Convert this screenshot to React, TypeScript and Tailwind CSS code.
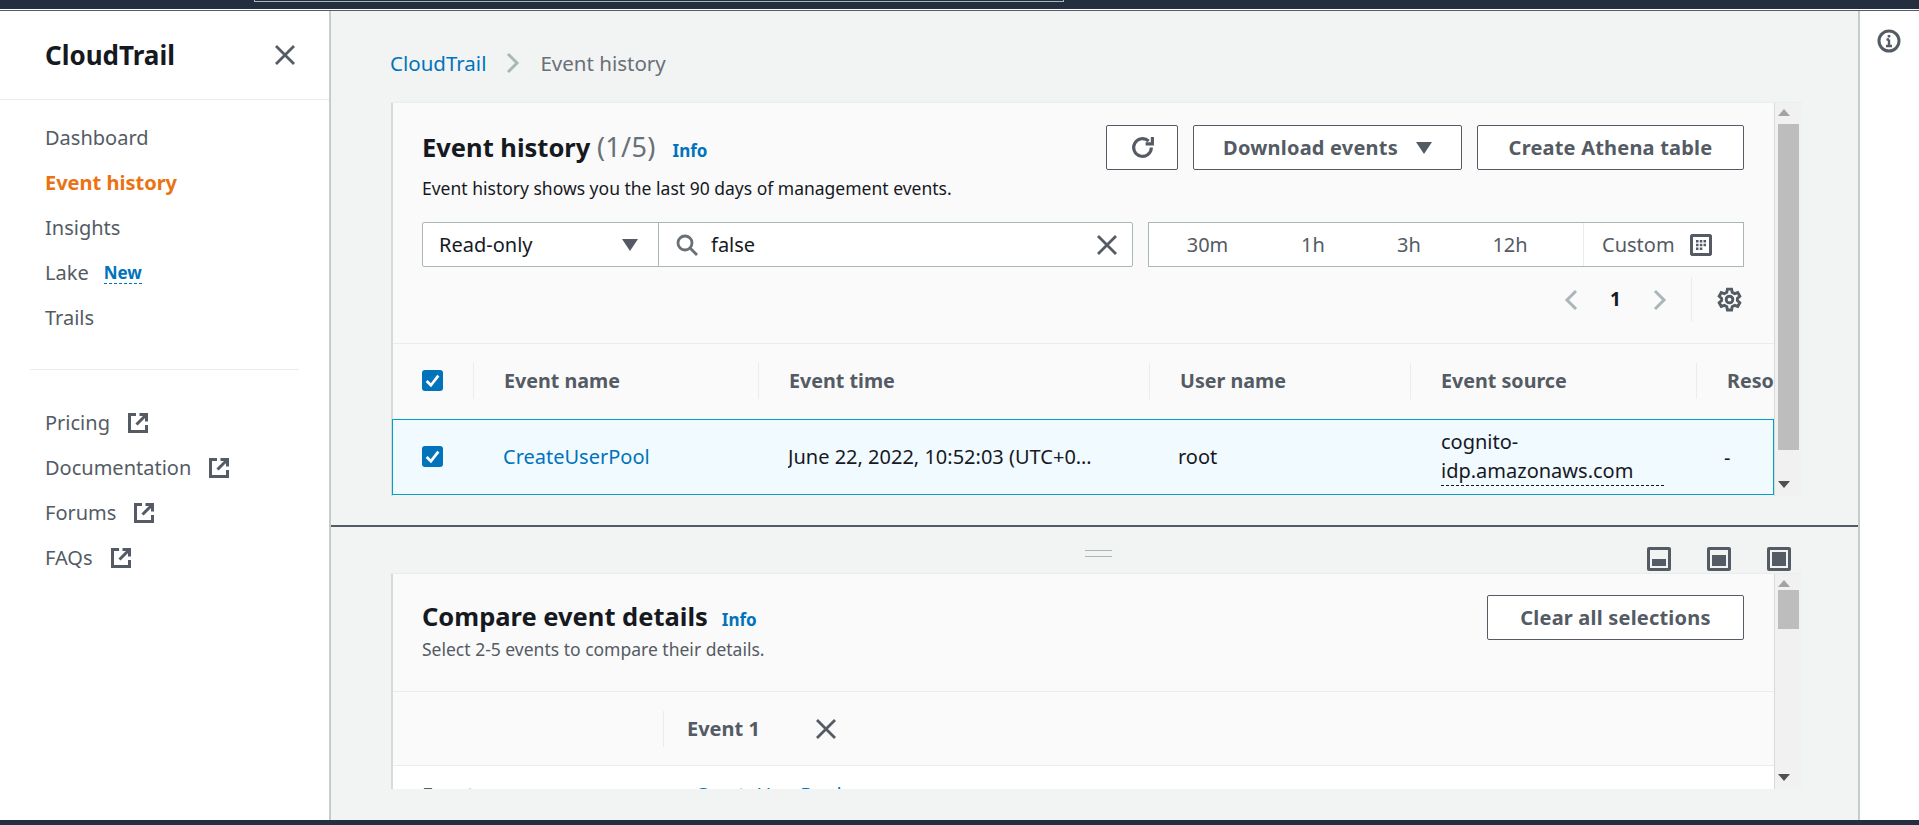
import React from "react";

const ExternalIcon = () => (
  <svg viewBox="0 0 22 22" className="w-[22px] h-[22px] text-[#545b64]" fill="none" stroke="currentColor" strokeWidth="3">
    <path d="M9 2.5H2.500v17h17V13" />
    <path d="M12.500 2.500h7v7" />
    <path d="M19 3 9.500 12.500" />
  </svg>
);

const CloseIcon = ({ size = 20 }: { size?: number }) => (
  <svg viewBox="0 0 20 20" width={size} height={size} fill="none" stroke="#545b64" strokeWidth="2.800">
    <path d="M1 1l18 18M19 1 1 19" />
  </svg>
);

const Caret = () => (
  <svg viewBox="0 0 16 12" className="w-4 h-3" fill="#545b64">
    <path d="M0 0h16L8 12z" />
  </svg>
);

const Check = () => (
  <span className="flex items-center justify-center w-[21px] h-[21px] rounded-[3px] bg-[#0073bb]">
    <svg viewBox="0 0 16 16" className="w-[17px] h-[17px]" fill="none" stroke="#fff" strokeWidth="2.600">
      <path d="M2.500 8.500 6.500 12.500 13.500 3.500" />
    </svg>
  </span>
);

const HeadCell = ({ label, width }: { label: string; width: string }) => (
  <div className={`${width} shrink-0 h-9 border-l border-[#eaeded] pl-[30px] flex items-center text-[19.700px] font-bold text-[#545b64] overflow-hidden whitespace-nowrap`}>
    {label}
  </div>
);

const PanelIcon = ({ fill }: { fill: string }) => (
  <div className="w-6 h-6 rounded-[2px] bg-[#545b64] p-[3px]">
    <div className="h-full bg-[#f2f3f3] flex flex-col justify-end">
      <div className={`${fill} bg-[#545b64]`} />
    </div>
  </div>
);

// scrollbar drawn like the old chromium one in the shot
const Scrollbar = ({ thumb }: { thumb: string }) => (
  <div className="relative w-[27px] shrink-0 bg-[#f1f1f1] border-l border-[#d5dbdb]">
    <div className="absolute left-[3px] top-[6px] w-0 h-0 border-x-[6px] border-x-transparent border-b-[7px] border-b-[#a3a3a3]" />
    <div className={`absolute left-[3px] w-[21px] bg-[#bdbdbd] ${thumb}`} />
    <div className="absolute left-[3px] bottom-[8px] w-0 h-0 border-x-[6px] border-x-transparent border-t-[7px] border-t-[#505050]" />
  </div>
);

const navTop = ["Dashboard", "Event history", "Insights"];
const navLinks = ["Pricing", "Documentation", "Forums", "FAQs"];

export default function App() {
  return (
    <div
      className="w-[1919px] h-[825px] overflow-hidden flex flex-col bg-[#f2f3f3] text-[20px] leading-[25px] text-[#16191f]"
      style={{ fontFamily: '"Noto Sans", "Open Sans", sans-serif' }}
    >
      {/* top bar */}
      <div className="h-[9px] shrink-0 bg-[#232f3e] pl-[254px]">
        <div className="w-[810px] h-[2px] border-x border-b border-[#aab7b8]" />
      </div>
      <div className="h-[2px] shrink-0 bg-[#545b64] border-t border-white" />

      <div className="flex-1 flex min-h-0">
        {/* sidebar */}
        <aside className="w-[331px] shrink-0 bg-white border-r-2 border-[#c6cccc]">
          <div className="h-[89px] border-b border-[#eaeded] pl-[45px] pr-[34px] flex items-center justify-between">
            <span className="text-[26px] font-bold">CloudTrail</span>
            <CloseIcon />
          </div>
          <nav className="pl-[45px] pt-[25px] flex flex-col gap-[20px] text-[#545b64]">
            {navTop.map((item) => (
              <a key={item} className={item === "Event history" ? "font-bold text-[#ec7211]" : ""}>
                {item}
              </a>
            ))}
            <a className="flex items-center gap-[15px]">
              Lake
              <span className="text-[17px] font-bold text-[#0073bb] border-b border-dashed border-[#0073bb] leading-[20px] mt-[1px]">New</span>
            </a>
            <a>Trails</a>
          </nav>
          <div className="mx-[30px] mt-[39px] border-t border-[#eaeded]" />
          <nav className="pl-[45px] pt-[40px] flex flex-col gap-[20px] text-[#545b64]">
            {navLinks.map((item) => (
              <a key={item} className="flex items-center gap-[17px]">
                {item}
                <ExternalIcon />
              </a>
            ))}
          </nav>
        </aside>

        {/* main */}
        <main className="flex-1 min-w-0 flex flex-col">
          <div className="h-[92px] shrink-0 pl-[59px] pt-[40px] flex items-start gap-[20px] text-[20.500px] text-[#687078]">
            <a className="text-[#0073bb]">CloudTrail</a>
            <svg viewBox="0 0 14 22" className="w-[14px] h-[22px] mt-[1px]" fill="none" stroke="#aab7b8" strokeWidth="3">
              <path d="M2 2l9 9-9 9" />
            </svg>
            <span>Event history</span>
          </div>

          {/* event history panel */}
          <div className="h-[393px] shrink-0 ml-[60px] mr-[57px] flex bg-[#fafafa] border-l-2 border-[#d5dbdb] shadow-[0_-1px_1px_#eaeded]">
            <div className="flex-1 min-w-0 flex flex-col">
              <div className="h-[241px] shrink-0 border-b border-[#eaeded] pl-[29px] pr-[30px] pt-[22px]">
                <div className="flex justify-between">
                  <div>
                    <div className="flex items-baseline gap-[17px] h-[44px] pt-[9px]">
                      <h1 className="text-[25.500px] font-bold">
                        Event history <span className="font-normal text-[#687078] text-[27px] tracking-[0.3px]">(1/5)</span>
                      </h1>
                      <span className="text-[17px] font-bold text-[#0073bb]">Info</span>
                    </div>
                    <p className="text-[17.500px] leading-[22px] mt-[8px]">Event history shows you the last 90 days of management events.</p>
                  </div>
                  <div className="flex gap-[15px] font-bold text-[#545b64]">
                    <button className="w-[72px] h-[45px] flex items-center justify-center bg-white border border-[#545b64] rounded-[2px]">
                      <svg viewBox="0 0 24 24" className="w-[25px] h-[25px]" fill="none" stroke="#545b64" strokeWidth="3">
                        <path d="M20.500 12a8.500 8.500 0 1 1-2.600-6.100" />
                        <path d="M21.500 2v6.500H15" />
                      </svg>
                    </button>
                    <button className="w-[269px] h-[45px] flex items-center justify-center gap-[18px] bg-white border border-[#545b64] rounded-[2px] tracking-[0.2px]">
                      Download events
                      <Caret />
                    </button>
                    <button className="w-[267px] h-[45px] bg-white border border-[#545b64] rounded-[2px] tracking-[0.2px]">Create Athena table</button>
                  </div>
                </div>

                <div className="flex gap-[15px] mt-[23px]">
                  <div className="w-[711px] h-[45px] flex bg-white border border-[#aab7b8] rounded-[2px]">
                    <div className="w-[236px] shrink-0 border-r border-[#aab7b8] pl-[16px] pr-[20px] flex items-center justify-between">
                      Read-only
                      <Caret />
                    </div>
                    <div className="flex-1 pl-[17px] pr-[15px] flex items-center gap-[13px]">
                      <svg viewBox="0 0 22 22" className="w-[22px] h-[22px]" fill="none" stroke="#687078" strokeWidth="2.800">
                        <circle cx="9" cy="9" r="7" />
                        <path d="M14 14l7 7" />
                      </svg>
                      <span className="flex-1">false</span>
                      <CloseIcon />
                    </div>
                  </div>
                  <div className="flex-1 h-[45px] flex items-center bg-white border border-[#aab7b8] text-[#545b64]">
                    <span className="w-[117px] text-center">30m</span>
                    <span className="w-[94px] text-center">1h</span>
                    <span className="w-[98px] text-center">3h</span>
                    <span className="w-[104px] text-center">12h</span>
                    <div className="ml-auto w-[160px] h-full border-l border-[#eaeded] pl-[18px] flex items-center gap-[15px]">
                      Custom
                      <svg viewBox="0 0 22 22" className="w-[22px] h-[22px]" fill="#545b64">
                        <path fillRule="evenodd" d="M0 1.500 1.500 0h19L22 1.500v19L20.500 22h-19L0 20.500zM3 3v16h16V3z" />
                        <path d="M6 6h2.500v2.500H6zM9.800 6h2.500v2.500H9.800zM13.500 6H16v2.500h-2.500zM6 9.800h2.500v2.500H6zM9.800 9.800h2.500v2.500H9.800zM13.500 9.800H16v2.500h-2.500zM6 13.500h2.500V16H6zM9.800 13.500h2.500V16H9.800z" />
                      </svg>
                    </div>
                  </div>
                </div>

                <div className="flex justify-end items-center h-[45px] mt-[10px]">
                  <svg viewBox="0 0 14 22" className="w-[14px] h-[22px]" fill="none" stroke="#aab7b8" strokeWidth="3">
                    <path d="M12 2 3 11l9 9" />
                  </svg>
                  <span className="w-[75px] text-center font-bold text-[19px]">1</span>
                  <svg viewBox="0 0 14 22" className="w-[14px] h-[22px]" fill="none" stroke="#aab7b8" strokeWidth="3">
                    <path d="M2 2l9 9-9 9" />
                  </svg>
                  <div className="h-full border-l border-[#eaeded] ml-[24px] mr-[25px]" />
                  <svg viewBox="0 0 24 24" className="w-[25px] h-[25px] mr-[2px]" fill="none" stroke="#545b64" strokeWidth="2.800">
                    <path d="M10 2h4l.6 3 2.400 1.400 2.900-1 2 3.500-2.300 2v2.200l2.300 2-2 3.500-2.900-1L14.600 19l-.6 3h-4l-.6-3L7 17.600l-2.900 1-2-3.500 2.300-2v-2.200l-2.300-2 2-3.500 2.900 1L9.400 5z" />
                    <circle cx="12" cy="12" r="3.200" />
                  </svg>
                </div>
              </div>

              {/* table head */}
              <div className="h-[75px] shrink-0 flex items-center overflow-hidden pb-[2px]">
                <div className="w-[80px] shrink-0 pl-[29px] flex"><Check /></div>
                <HeadCell label="Event name" width="w-[285px]" />
                <HeadCell label="Event time" width="w-[391px]" />
                <HeadCell label="User name" width="w-[261px]" />
                <HeadCell label="Event source" width="w-[286px]" />
                <HeadCell label="Resource type" width="w-[200px]" />
              </div>
              {/* selected row */}
              <div className="h-[76px] shrink-0 -ml-px flex items-center bg-[#f1faff] border border-[#00a1c9] overflow-hidden">
                <div className="w-[110px] shrink-0 pl-[29px] pb-[2px] flex"><Check /></div>
                <span className="w-[285px] shrink-0 text-[#0073bb] pb-[1px]">CreateUserPool</span>
                <span className="w-[390px] shrink-0 pr-[76px] truncate pb-[1px]">June 22, 2022, 10:52:03 (UTC+02:00)</span>
                <span className="w-[263px] shrink-0 pb-[1px]">root</span>
                <div className="w-[283px] shrink-0 leading-[30px] pr-[60px] -mt-[2px]">
                  <span>cognito-</span>
                  <span className="block border-b border-dashed border-[#16191f] leading-[28px] whitespace-nowrap">idp.amazonaws.com</span>
                </div>
                <span>-</span>
              </div>
            </div>
            <Scrollbar thumb="top-[21px] h-[326px]" />
          </div>

          <div className="h-[29px] shrink-0" />
          <div className="h-[2px] shrink-0 bg-[#545b64]" />

          {/* splitter handle + panel size icons */}
          <div className="h-[47px] shrink-0 flex items-center pl-[754px] pr-[67px]">
            <div className="w-[27px] h-[7px] border-y border-[#aab7b8] mt-[6px]" />
            <div className="flex-1 flex justify-end gap-[36px] self-end pb-[3px]">
              <PanelIcon fill="h-[7px] mx-[2px] mb-[2px]" />
              <PanelIcon fill="h-[11px] mx-[2px] mb-[2px]" />
              <PanelIcon fill="h-[14px] m-[2px]" />
            </div>
          </div>

          {/* compare panel */}
          <div className="h-[215px] shrink-0 ml-[60px] mr-[57px] flex bg-[#fafafa] border-l-2 border-[#d5dbdb] shadow-[0_-1px_1px_#eaeded] overflow-hidden">
            <div className="flex-1 min-w-0 flex flex-col">
              <div className="h-[118px] shrink-0 border-b border-[#eaeded] pl-[29px] pr-[30px] pt-[21px] flex justify-between">
                <div className="pt-[9px]">
                  <div className="flex items-baseline gap-[14px]">
                    <h2 className="text-[25.500px] font-bold">Compare event details</h2>
                    <span className="text-[17px] font-bold text-[#0073bb]">Info</span>
                  </div>
                  <p className="text-[17.500px] leading-[22px] mt-[6px] text-[#545b64]">Select 2-5 events to compare their details.</p>
                </div>
                <button className="w-[257px] h-[45px] bg-white border border-[#545b64] rounded-[2px] font-bold text-[#545b64] tracking-[0.2px]">Clear all selections</button>
              </div>
              <div className="h-[74px] shrink-0 border-b border-[#eaeded] flex items-center pl-[270px]">
                <div className="h-9 border-l border-[#eaeded] pl-[23px] w-[153px] flex items-center font-bold text-[#545b64]">Event 1</div>
                <CloseIcon />
              </div>
              <div className="flex-1 min-h-0 bg-white flex items-start pl-[29px] pt-[16px] overflow-hidden text-[#545b64]">
                <span className="w-[273px]">Event name</span>
                <span className="text-[#0073bb]">CreateUserPool</span>
              </div>
            </div>
            <Scrollbar thumb="top-[16px] h-[39px]" />
          </div>
          <div className="flex-1" />
        </main>

        {/* right rail */}
        <aside className="w-[61px] shrink-0 bg-white border-l-2 border-[#c6cccc] pt-[18px] pl-[17px]">
          <svg viewBox="0 0 24 24" className="w-[24px] h-[24px]" fill="none" stroke="#545b64" strokeWidth="3">
            <circle cx="12" cy="12" r="10" />
            <path d="M12 10.500V17M9 17h6M9.500 10.500H12" strokeWidth="2.400" />
            <path d="M12 6v2.500" strokeWidth="2.600" />
          </svg>
        </aside>
      </div>

      {/* bottom bar */}
      <div className="h-[5px] shrink-0 bg-[#232f3e]" />
    </div>
  );
}
